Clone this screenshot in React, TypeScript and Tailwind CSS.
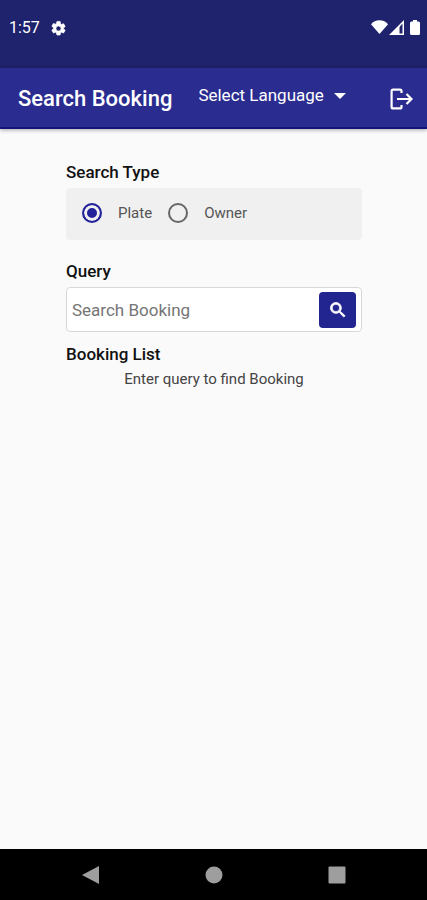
import { useState } from "react";

const SEARCH_TYPES = ["Plate", "Owner"];

export default function App() {
  return (
    <div className="flex min-h-screen flex-col bg-[#fafafa] font-['Roboto',sans-serif]">
      <StatusBar />
      <AppHeader />
      <SearchBooking />
      <SystemNav />
    </div>
  );
}

function StatusBar() {
  return (
    <div className="flex h-[68px] items-start justify-between bg-[#1f226c] py-4 pr-[7px] pl-[9px] text-white">
      <div className="flex items-center gap-[10px]">
        <span className="text-base leading-6">1:57</span>
        <svg viewBox="0 0 24 24" className="size-[17px]" fill="currentColor" aria-hidden="true">
          <path d="M19.14 12.94c.04-.3.06-.61.06-.94 0-.32-.02-.64-.07-.94l2.03-1.58a.49.49 0 0 0 .12-.61l-1.92-3.32a.49.49 0 0 0-.59-.22l-2.39.96a7 7 0 0 0-1.62-.94l-.36-2.54A.48.48 0 0 0 13.92 2h-3.84a.48.48 0 0 0-.48.41l-.36 2.54c-.59.24-1.13.57-1.62.94l-2.39-.96a.48.48 0 0 0-.59.22L2.72 8.47a.48.48 0 0 0 .12.61l2.03 1.58c-.05.3-.07.62-.07.94s.02.64.07.94l-2.03 1.58a.49.49 0 0 0-.12.61l1.92 3.32c.12.22.37.29.59.22l2.39-.96c.5.38 1.03.7 1.62.94l.36 2.54c.05.24.24.41.48.41h3.84c.24 0 .44-.17.47-.41l.36-2.54a6.8 6.8 0 0 0 1.62-.94l2.39.96c.22.08.47 0 .59-.22l1.92-3.32a.48.48 0 0 0-.12-.61zM12 15.6a3.6 3.6 0 1 1 0-7.2 3.6 3.6 0 0 1 0 7.2z" stroke="currentColor" strokeWidth="1" />
        </svg>
      </div>
      <div className="flex h-[22px] items-center" aria-hidden="true">
        <svg viewBox="0 0 17 14" className="h-[14px] w-[17px]" fill="currentColor">
          <path d="M8.500 14 0 4.200C2 1.500 5 .3 8.500.3S15 1.500 17 4.200z" />
        </svg>
        <svg viewBox="0 0 15 15" className="ml-px h-[15px] w-[15px]" fill="currentColor">
          <path fillRule="evenodd" d="M0 15 15 0v15zM10.500 7v6.500h3v-10z" />
        </svg>
        <svg viewBox="0 0 10 15" className="ml-[6px] h-[15px] w-[10px]" fill="currentColor">
          <path d="M3 0h4v1.500h1.500Q10 1.500 10 3v10.500Q10 15 8.500 15h-7Q0 15 0 13.500V3q0-1.500 1.500-1.500H3z" />
        </svg>
      </div>
    </div>
  );
}

function AppHeader() {
  return (
    <header className="flex h-[61px] items-center border-b-2 border-[#14147c] bg-[#2a2c90] pt-[3px] pr-[14px] pl-[18px] text-white shadow-[0_1px_4px_rgba(0,0,0,0.35)]">
      <h1 className="text-[22px] leading-7 font-medium whitespace-nowrap">Search Booking</h1>
      <div className="relative ml-[26px] pb-2">
        <select
          aria-label="Select Language"
          className="w-[148px] appearance-none bg-transparent text-[17px] leading-6 outline-none"
        >
          <option>Select Language</option>
        </select>
        <svg
          viewBox="0 0 12 6"
          className="pointer-events-none absolute top-[10px] right-0 h-[6px] w-[12px]"
          fill="currentColor"
          aria-hidden="true"
        >
          <path d="M0 0h12L6 6z" />
        </svg>
      </div>
      <button type="button" aria-label="Log out" className="ml-auto">
        <svg viewBox="0 0 24 22" className="h-[22px] w-[24px]" fill="none" stroke="currentColor" strokeWidth="2.200">
          <path d="M12.500 5V3.100Q12.500 1.600 11 1.600H4.100Q2.600 1.600 2.600 3.100v15.800q0 1.500 1.500 1.500H11q1.500 0 1.500-1.500V17M8 11h14M17.500 6l5 5-5 5" />
        </svg>
      </button>
    </header>
  );
}

function SearchBooking() {
  const [type, setType] = useState(SEARCH_TYPES[0]);
  const [query, setQuery] = useState("");

  return (
    <main className="flex grow flex-col pt-8 pr-[65px] pl-[66px] text-[#111]">
      <fieldset>
        <legend className="text-[17px] leading-[22px] font-medium">Search Type</legend>
        <div className="mt-[5px] flex h-[52px] items-center gap-4 rounded bg-[#f0f0f0] px-4 pb-[3px]">
          {SEARCH_TYPES.map((t) => (
            <label key={t} className="flex items-center gap-4 text-[15px] leading-5 text-[#555]">
              <input
                type="radio"
                name="searchType"
                checked={type === t}
                onChange={() => setType(t)}
                className="size-5 appearance-none rounded-full border-2 border-[#666] checked:border-[#22229a] checked:bg-[#22229a] checked:shadow-[inset_0_0_0_3px_#f0f0f0]"
              />
              {t}
            </label>
          ))}
        </div>
      </fieldset>

      <form className="mt-5" onSubmit={(e) => e.preventDefault()}>
        <label htmlFor="query" className="block text-[17px] leading-[22px] font-medium">
          Query
        </label>
        <div className="mt-[5px] flex h-[45px] items-center rounded border border-[#d8d8d8] bg-white px-[5px]">
          <input
            id="query"
            type="text"
            value={query}
            onChange={(e) => setQuery(e.target.value)}
            placeholder="Search Booking"
            className="min-w-0 grow text-[17px] leading-6 outline-none placeholder:text-[#757575]"
          />
          <button
            type="submit"
            aria-label="Search"
            className="flex h-9 w-[37px] shrink-0 items-center justify-center rounded bg-[#22248f] text-white"
          >
            <svg viewBox="0 0 24 24" className="size-5" fill="currentColor" stroke="currentColor" aria-hidden="true">
              <path d="M15.500 14h-.79l-.28-.27A6.470 6.470 0 0 0 16 9.500 6.500 6.500 0 1 0 9.500 16c1.610 0 3.090-.59 4.230-1.570l.27.28v.79l5 4.990L20.490 19zm-6 0a4.500 4.500 0 1 1 0-9 4.500 4.500 0 0 1 0 9z" />
            </svg>
          </button>
        </div>
      </form>

      <h2 className="mt-[11px] text-[17px] leading-[22px] font-medium">Booking List</h2>
      <p className="mt-1 text-center text-[15px] leading-5 whitespace-nowrap text-[#444]">
        Enter query to find Booking
      </p>
    </main>
  );
}

function SystemNav() {
  return (
    <nav className="flex h-[51px] items-center justify-center gap-[105px] bg-black text-[#9e9e9e]">
      <button type="button" aria-label="Back">
        <svg viewBox="0 0 18 18" className="size-[18px]" fill="currentColor">
          <path d="M17 0v18L0 9z" />
        </svg>
      </button>
      <button type="button" aria-label="Home">
        <svg viewBox="0 0 18 18" className="size-[18px]" fill="currentColor">
          <circle cx="9" cy="9" r="8.500" />
        </svg>
      </button>
      <button type="button" aria-label="Recent apps">
        <svg viewBox="0 0 18 18" className="size-[18px]" fill="currentColor">
          <rect x="0.500" y="0.500" width="17" height="17" rx="1" />
        </svg>
      </button>
    </nav>
  );
}
